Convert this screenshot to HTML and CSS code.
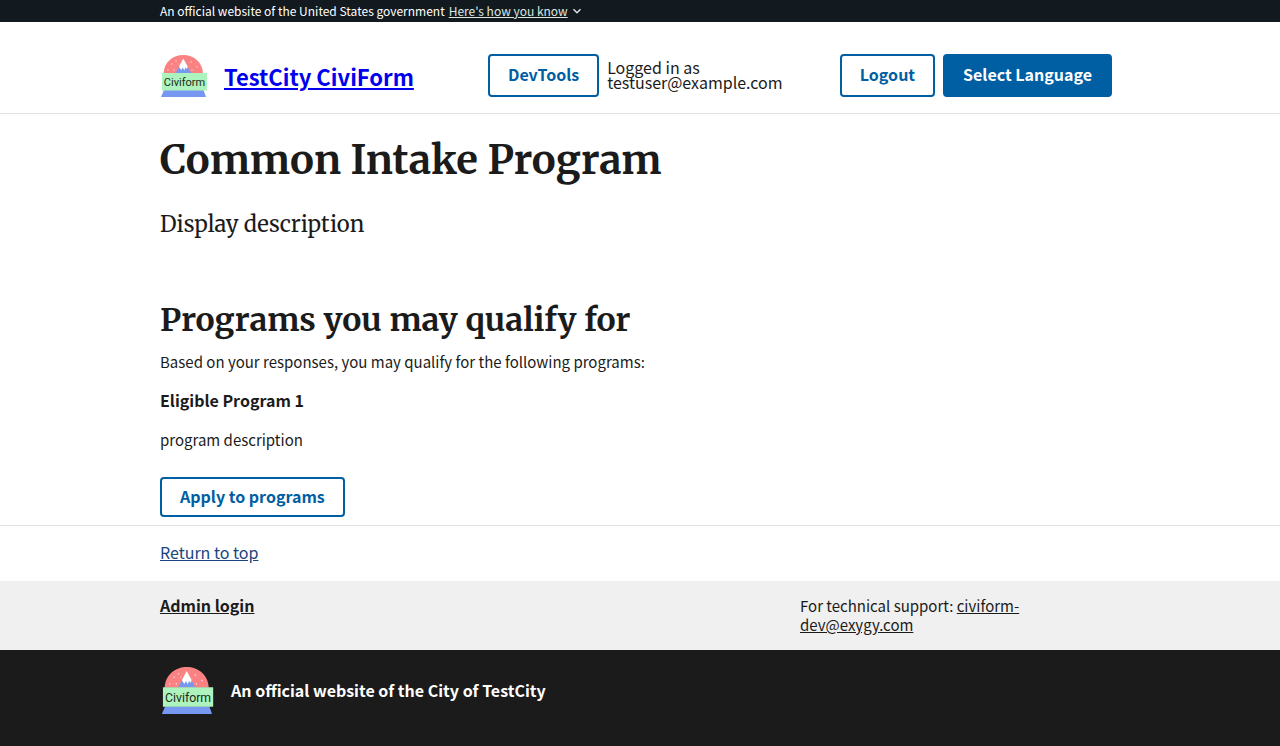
FILE: index.html
```html
<!DOCTYPE html>
<html lang="en">
<head>
<meta charset="utf-8">
<meta name="viewport" content="width=device-width, initial-scale=1">
<title>Common Intake Program</title>
<link rel="stylesheet" href="styles.css">
</head>
<body>
<div class="banner">
  <div class="container banner-inner">
    <span>An official website of the United States government</span>
    <button type="button" class="banner-button"><span class="banner-link">Here's how you know</span>
      <svg class="chevron" viewBox="0 0 10 10" aria-hidden="true"><path d="M1.500 3.200 5 6.700 8.500 3.200" fill="none" stroke="#dfe1e2" stroke-width="1.500"/></svg>
    </button>
  </div>
</div>
<header class="header">
  <div class="container header-inner">
    <div class="brand">
      <svg class="logo" viewBox="0 0 48 43" role="img" aria-label="TestCity logo">
        <path d="M3.500 19.500C4 8 13 1 23.300 1S42.500 8 43 19.500z" fill="#fa8283"/>
        <path d="M15.500 19 21 9.500h4.500L31 19z" fill="#7698f0"/>
        <path d="M19 12.500 23.300 4.500 27.700 12.500 27 15l-1.700-1.500-1 3-1.500-3-1.500 2.500-1.300-1.500z" fill="#fff"/>
        <g fill="#ffd9d9"><circle cx="16" cy="7" r=".7"/><circle cx="12" cy="10" r=".7"/><circle cx="18" cy="10" r=".5"/><circle cx="8" cy="16" r=".7"/><circle cx="14" cy="16" r=".7"/><circle cx="31" cy="8" r=".7"/><circle cx="37" cy="13" r=".7"/><circle cx="32" cy="16" r=".7"/></g>
        <path d="M4 36h39.500l2.500 7H1z" fill="#7698f0"/>
        <path d="M2 19h45v17.500H2z" fill="#acf3bd"/>
        <text x="24.500" y="32" text-anchor="middle" class="logo-text">Civiform</text>
      </svg>
      <a class="brand-link" href="#">TestCity CiviForm</a>
    </div>
    <nav class="nav">
      <button type="button" class="button">DevTools</button>
      <span class="user">Logged in as testuser@example.com</span>
      <button type="button" class="button">Logout</button>
      <button type="button" class="button button-solid">Select Language</button>
    </nav>
  </div>
</header>
<main class="main">
  <div class="container">
    <h1 class="title">Common Intake Program</h1>
    <p class="intro">Display description</p>
    <h2 class="subtitle">Programs you may qualify for</h2>
    <p class="text">Based on your responses, you may qualify for the following programs:</p>
    <h3 class="text program-name">Eligible Program 1</h3>
    <p class="text">program description</p>
    <button type="button" class="button button-apply">Apply to programs</button>
  </div>
</main>
<footer class="footer">
  <div class="return"><div class="container"><a class="return-link" href="#">Return to top</a></div></div>
  <div class="footer-primary">
    <div class="container footer-columns">
      <div><a class="admin-link" href="#">Admin login</a></div>
      <div class="support">For technical support: <a class="support-link" href="mailto:civiform-dev@exygy.com">civiform-dev@exygy.com</a></div>
    </div>
  </div>
  <div class="footer-secondary">
    <div class="container footer-brand">
      <svg class="footer-logo" viewBox="0 0 48 43" role="img" aria-label="TestCity logo">
        <path d="M3.500 19.500C4 8 13 1 23.300 1S42.500 8 43 19.500z" fill="#fa8283"/>
        <path d="M15.500 19 21 9.500h4.500L31 19z" fill="#7698f0"/>
        <path d="M19 12.500 23.300 4.500 27.700 12.500 27 15l-1.700-1.500-1 3-1.500-3-1.500 2.500-1.300-1.500z" fill="#fff"/>
        <g fill="#ffd9d9"><circle cx="16" cy="7" r=".7"/><circle cx="12" cy="10" r=".7"/><circle cx="18" cy="10" r=".5"/><circle cx="8" cy="16" r=".7"/><circle cx="14" cy="16" r=".7"/><circle cx="31" cy="8" r=".7"/><circle cx="37" cy="13" r=".7"/><circle cx="32" cy="16" r=".7"/></g>
        <path d="M4 36h39.500l2.500 7H1z" fill="#7698f0"/>
        <path d="M2 19h45v17.500H2z" fill="#acf3bd"/>
        <text x="24.500" y="32" text-anchor="middle" class="logo-text">Civiform</text>
      </svg>
      <span>An official website of the City of TestCity</span>
    </div>
  </div>
</footer>
</body>
</html>
```
FILE: styles.css
```css
* { box-sizing: border-box; }
body {
  margin: 0;
  min-height: 100vh;
  display: flex;
  flex-direction: column;
  color: #1b1b1b;
  background: #fff;
  font: 16px/20px "Source Sans Pro", "Noto Sans CJK SC", sans-serif;
}
button { font-family: inherit; cursor: pointer; }
.logo-text { font: 11px Roboto, sans-serif; fill: #1b2b20; }
.container { width: 100%; max-width: 1024px; margin: 0 auto; padding: 0 32px; }

.banner { background: #12191f; color: #fff; font-size: 12px; line-height: 22px; }
.banner-inner { display: flex; gap: 4px; }
.banner-button {
  display: flex; align-items: center; gap: 4px;
  padding: 0; border: 0; background: none; color: #dbe8e0;
  font-size: 12px; line-height: 22px;
}
.banner-link { text-decoration: underline; }
.chevron { width: 10px; height: 10px; }

.header { border-bottom: 1px solid #dfe1e2; }
.header-inner { display: flex; align-items: center; padding-top: 32px; padding-bottom: 16px; }
.brand { flex: 0 0 33.33%; display: flex; align-items: center; gap: 16px; }
.logo { width: 48px; height: 43px; flex: none; }
.brand-link { color: #00e; font-size: 22px; line-height: 24px; font-weight: 700; white-space: nowrap; }
.nav { flex: 1; display: flex; align-items: center; gap: 8px; padding: 0 8px; }
.user { flex: 1; line-height: 15px; padding-bottom: 2px; }
.button {
  padding: 11px 18px 13px; border: 2px solid #005ea2; border-radius: 4px;
  background: #fff; color: #005ea2; font-size: 16px; line-height: 15px; font-weight: 700; white-space: nowrap;
}
.button-solid { background: #005ea2; color: #fff; }

.main { padding-bottom: 8px; }
.title, .subtitle, .intro { margin: 0; font-family: Merriweather, "DejaVu Serif Condensed", "DejaVu Serif", serif; }
.title { padding-top: 22px; font-size: 40px; line-height: 48px; }
.intro { padding: 24px 0 60px; font-size: 22px; line-height: 32px; }
.subtitle { font-size: 32px; line-height: 40px; margin-bottom: 10px; }
.text { margin: 0 0 16px; font-size: 15px; line-height: 23px; }
.program-name { font-size: 16px; font-weight: 700; }
.button-apply { margin-top: 10px; padding: 9px 18px 11px; line-height: 16px; }

.footer { flex: 1; display: flex; flex-direction: column; }
.return { padding: 15px 0 17px; border-top: 1px solid #dfe1e2; line-height: 23px; }
.return-link { color: #1a4480; }
.footer-primary { padding: 15px 0 16px; background: #f0f0f0; line-height: 19px; }
.footer-columns { display: grid; grid-template-columns: 2fr 1fr; }
.support { max-width: 240px; font-size: 15px; }
.admin-link { color: #1b1b1b; font-weight: 700; }
.support-link { color: #1b1b1b; }
.footer-secondary { flex: 1; padding: 16px 0 32px; background: #1b1b1b; color: #fff; font-weight: 700; }
.footer-brand { display: flex; align-items: center; gap: 16px; }
.footer-logo { width: 55px; height: 48px; }
```
